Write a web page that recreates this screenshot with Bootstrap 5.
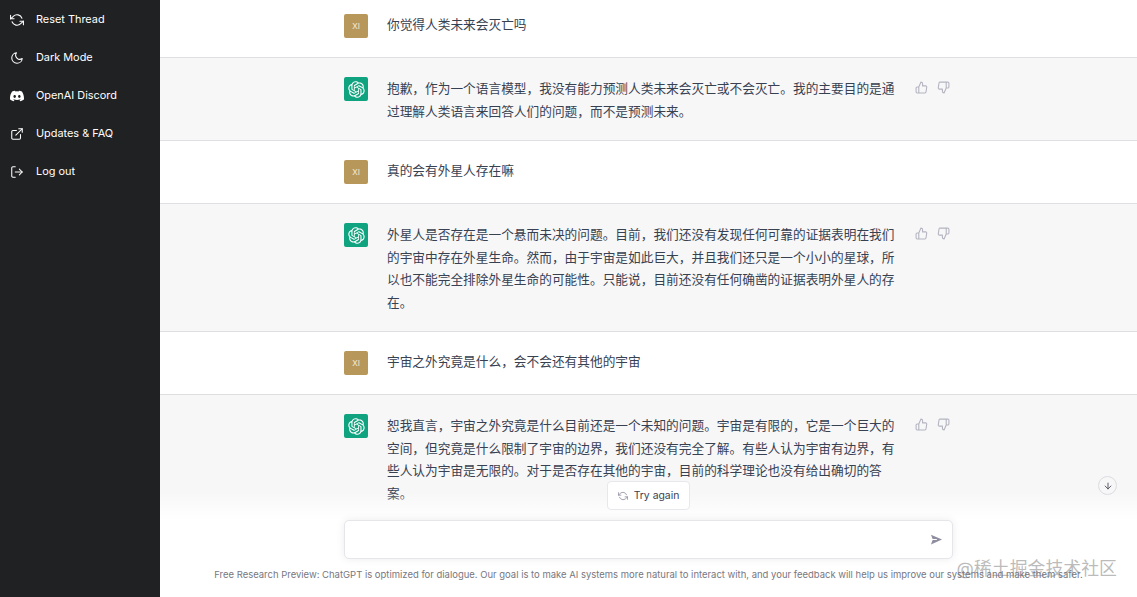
<!DOCTYPE html>
<html lang="zh">
<head>
  <meta charset="UTF-8" />
  <meta name="viewport" content="width=device-width, initial-scale=1" />
  <title>ChatGPT</title>
  <link href="https://cdn.jsdelivr.net/npm/bootstrap@5.3.0/dist/css/bootstrap.min.css" rel="stylesheet" />
  <style>
    html, body { height: 100%; overflow: hidden; }
    body { font-family: Inter, "Noto Sans CJK SC", sans-serif; color: #374151; background: #fff; }
    .app-shell { height: 100vh; }
    .side-panel { width: 160px; flex: none; background: #202123; }
    .side-item { height: 38px; padding: 1px 0 0 10px; gap: 12px; color: #fff; font-size: 10.9px; text-decoration: none; }
    .side-item svg { width: 14px; height: 14px; flex: none; stroke-width: 1.8; }
    .chat-main { min-width: 0; }
    .msg-row { border-bottom: 1px solid #dfdfe1; }
    .msg-user { padding: 19px 0; }
    .msg-user.msg-first { padding-top: 14px; }
    .msg-bot { background: #f7f7f8; padding: 19px 0 18px; }
    .msg-inner { width: 609px; margin: 0 auto; gap: 19px; align-items: flex-start; }
    .avatar-box { width: 24px; height: 24px; flex: none; border-radius: 2px; }
    .avatar-user { background: #b8985a; color: #f4ead6; font-size: 8px; }
    .avatar-bot { background: #10a37f; color: #fff; }
    .avatar-bot svg { width: 17px; height: 17px; }
    .msg-text { width: 509px; flex: none; font-size: 12.7px; line-height: 22.5px; font-family: "Noto Sans CJK SC", sans-serif; margin: 0; text-spacing-trim: space-all; }
    .msg-user .msg-text { margin-top: -1px; }
    .vote-icons { gap: 9px; margin-top: 4px; color: #b4b4c0; }
    .vote-icons svg { width: 13px; height: 13px; }
    .composer-wrap { left: 0; right: 0; bottom: 0; height: 137px; padding-top: 21px; background: linear-gradient(180deg, rgba(255,255,255,0) 32px, #fff 60px); }
    .retry-btn { width: 83px; height: 29px; border: 1px solid #e8e8ec; border-radius: 4px; background: #fff; font-size: 10.4px; color: #40414f; gap: 6px; padding: 0; }
    .retry-btn svg { width: 10px; height: 10px; color: #8e8ea0; }
    .composer-box { width: 609px; height: 39px; margin-top: 10px; background: #fff; border: 1px solid #e5e5ea; border-radius: 5px; box-shadow: 0 0 8px rgba(0,0,0,.08); padding-right: 9px; }
    .composer-box svg { width: 13px; height: 13px; color: #8e8ea0; }
    .legal-note { margin-top: 10px; font-size: 9.48px; line-height: 12px; color: #77777f; white-space: nowrap; }
    .down-btn { right: 20px; top: 476px; width: 19px; height: 19px; border: 1px solid #dcdce2; border-radius: 50%; background: #f7f7f8; color: #40414f; }
    .down-btn svg { width: 10px; height: 10px; }
    .mark-text { right: 20px; bottom: 17px; font-size: 17.9px; line-height: 22px; color: rgba(120,120,120,.5); white-space: nowrap; }
  </style>
</head>
<body>
  <div class="app-shell d-flex">
    <nav class="side-panel d-flex flex-column">
      <a class="side-item d-flex align-items-center" href="#">
        <svg viewBox="0 0 24 24" fill="none" stroke="currentColor" stroke-width="2" stroke-linecap="round" stroke-linejoin="round"><polyline points="1 4 1 10 7 10"/><polyline points="23 20 23 14 17 14"/><path d="M20.49 9A9 9 0 0 0 5.64 5.64L1 10m22 4l-4.64 4.36A9 9 0 0 1 3.51 15"/></svg>
        Reset Thread
      </a>
      <a class="side-item d-flex align-items-center" href="#">
        <svg viewBox="0 0 24 24" fill="none" stroke="currentColor" stroke-width="2" stroke-linecap="round" stroke-linejoin="round"><path d="M21 12.79A9 9 0 1 1 11.21 3 7 7 0 0 0 21 12.79z"/></svg>
        Dark Mode
      </a>
      <a class="side-item d-flex align-items-center" href="#">
        <svg viewBox="0 0 16 16" fill="currentColor"><path d="M13.545 2.907a13.2 13.2 0 0 0-3.257-1.011.05.05 0 0 0-.052.025c-.141.25-.297.577-.406.833a12.2 12.2 0 0 0-3.658 0 8 8 0 0 0-.412-.833.05.05 0 0 0-.052-.025c-1.125.194-2.22.534-3.257 1.011a.04.04 0 0 0-.021.018C.356 6.024-.213 9.047.066 12.032q.003.022.021.037a13.3 13.3 0 0 0 3.995 2.02.05.05 0 0 0 .056-.019q.463-.63.818-1.329a.05.05 0 0 0-.01-.059l-.018-.011a9 9 0 0 1-1.248-.595.05.05 0 0 1-.02-.066l.015-.019q.127-.095.248-.195a.05.05 0 0 1 .051-.007c2.619 1.196 5.454 1.196 8.041 0a.05.05 0 0 1 .053.007q.121.1.248.195a.05.05 0 0 1-.004.085 8 8 0 0 1-1.249.594.05.05 0 0 0-.03.03.05.05 0 0 0 .003.041c.24.465.515.909.817 1.329a.05.05 0 0 0 .056.019 13.2 13.2 0 0 0 4.001-2.02.05.05 0 0 0 .021-.037c.334-3.451-.559-6.449-2.366-9.106a.03.03 0 0 0-.02-.019m-8.198 7.307c-.789 0-1.438-.724-1.438-1.612s.637-1.613 1.438-1.613c.807 0 1.45.73 1.438 1.613 0 .888-.637 1.612-1.438 1.612m5.316 0c-.788 0-1.438-.724-1.438-1.612s.637-1.613 1.438-1.613c.807 0 1.451.73 1.438 1.613 0 .888-.631 1.612-1.438 1.612"/></svg>
        OpenAI Discord
      </a>
      <a class="side-item d-flex align-items-center" href="#">
        <svg viewBox="0 0 24 24" fill="none" stroke="currentColor" stroke-width="2" stroke-linecap="round" stroke-linejoin="round"><path d="M18 13v6a2 2 0 0 1-2 2H5a2 2 0 0 1-2-2V8a2 2 0 0 1 2-2h6"/><polyline points="15 3 21 3 21 9"/><line x1="10" y1="14" x2="21" y2="3"/></svg>
        Updates &amp; FAQ
      </a>
      <a class="side-item d-flex align-items-center" href="#">
        <svg viewBox="0 0 24 24" fill="none" stroke="currentColor" stroke-width="2" stroke-linecap="round" stroke-linejoin="round"><path d="M9 21H5a2 2 0 0 1-2-2V5a2 2 0 0 1 2-2h4"/><polyline points="16 17 21 12 16 7"/><line x1="21" y1="12" x2="9" y2="12"/></svg>
        Log out
      </a>
    </nav>

    <main class="chat-main flex-grow-1 position-relative overflow-hidden">
      <div class="msg-row msg-user msg-first">
        <div class="msg-inner d-flex">
          <div class="avatar-box avatar-user d-flex align-items-center justify-content-center">XI</div>
          <p class="msg-text">你觉得人类未来会灭亡吗</p>
        </div>
      </div>

      <div class="msg-row msg-bot">
        <div class="msg-inner d-flex">
          <div class="avatar-box avatar-bot d-flex align-items-center justify-content-center"><svg viewBox="0 0 41 41" fill="currentColor"><use href="#openai-logo"/></svg></div>
          <p class="msg-text">抱歉，作为一个语言模型，我没有能力预测人类未来会灭亡或不会灭亡。我的主要目的是通过理解人类语言来回答人们的问题，而不是预测未来。</p>
          <div class="vote-icons d-flex"><svg viewBox="0 0 24 24" fill="none" stroke="currentColor" stroke-width="2" stroke-linecap="round" stroke-linejoin="round"><use href="#thumb-up"/></svg><svg viewBox="0 0 24 24" fill="none" stroke="currentColor" stroke-width="2" stroke-linecap="round" stroke-linejoin="round"><use href="#thumb-down"/></svg></div>
        </div>
      </div>

      <div class="msg-row msg-user">
        <div class="msg-inner d-flex">
          <div class="avatar-box avatar-user d-flex align-items-center justify-content-center">XI</div>
          <p class="msg-text">真的会有外星人存在嘛</p>
        </div>
      </div>

      <div class="msg-row msg-bot">
        <div class="msg-inner d-flex">
          <div class="avatar-box avatar-bot d-flex align-items-center justify-content-center"><svg viewBox="0 0 41 41" fill="currentColor"><use href="#openai-logo"/></svg></div>
          <p class="msg-text">外星人是否存在是一个悬而未决的问题。目前，我们还没有发现任何可靠的证据表明在我们的宇宙中存在外星生命。然而，由于宇宙是如此巨大，并且我们还只是一个小小的星球，所以也不能完全排除外星生命的可能性。只能说，目前还没有任何确凿的证据表明外星人的存在。</p>
          <div class="vote-icons d-flex"><svg viewBox="0 0 24 24" fill="none" stroke="currentColor" stroke-width="2" stroke-linecap="round" stroke-linejoin="round"><use href="#thumb-up"/></svg><svg viewBox="0 0 24 24" fill="none" stroke="currentColor" stroke-width="2" stroke-linecap="round" stroke-linejoin="round"><use href="#thumb-down"/></svg></div>
        </div>
      </div>

      <div class="msg-row msg-user">
        <div class="msg-inner d-flex">
          <div class="avatar-box avatar-user d-flex align-items-center justify-content-center">XI</div>
          <p class="msg-text">宇宙之外究竟是什么，会不会还有其他的宇宙</p>
        </div>
      </div>

      <div class="msg-bot">
        <div class="msg-inner d-flex">
          <div class="avatar-box avatar-bot d-flex align-items-center justify-content-center"><svg viewBox="0 0 41 41" fill="currentColor"><use href="#openai-logo"/></svg></div>
          <p class="msg-text">恕我直言，宇宙之外究竟是什么目前还是一个未知的问题。宇宙是有限的，它是一个巨大的空间，但究竟是什么限制了宇宙的边界，我们还没有完全了解。有些人认为宇宙有边界，有些人认为宇宙是无限的。对于是否存在其他的宇宙，目前的科学理论也没有给出确切的答案。</p>
          <div class="vote-icons d-flex"><svg viewBox="0 0 24 24" fill="none" stroke="currentColor" stroke-width="2" stroke-linecap="round" stroke-linejoin="round"><use href="#thumb-up"/></svg><svg viewBox="0 0 24 24" fill="none" stroke="currentColor" stroke-width="2" stroke-linecap="round" stroke-linejoin="round"><use href="#thumb-down"/></svg></div>
        </div>
      </div>

      <div class="composer-wrap position-absolute d-flex flex-column align-items-center">
        <button class="retry-btn d-flex align-items-center justify-content-center" type="button">
          <svg viewBox="0 0 24 24" fill="none" stroke="currentColor" stroke-width="2" stroke-linecap="round" stroke-linejoin="round"><polyline points="1 4 1 10 7 10"/><polyline points="23 20 23 14 17 14"/><path d="M20.49 9A9 9 0 0 0 5.64 5.64L1 10m22 4l-4.64 4.36A9 9 0 0 1 3.51 15"/></svg>
          Try again
        </button>
        <div class="composer-box d-flex align-items-center justify-content-end">
          <svg viewBox="0 0 20 20" fill="currentColor"><path d="M1.5 2.5 18.5 10 1.5 17.5 4 10.8h6.5v-1.6H4z"/></svg>
        </div>
        <div class="legal-note">Free Research Preview: ChatGPT is optimized for dialogue. Our goal is to make AI systems more natural to interact with, and your feedback will help us improve our systems and make them safer.</div>
      </div>

      <div class="down-btn position-absolute d-flex align-items-center justify-content-center">
        <svg viewBox="0 0 24 24" fill="none" stroke="currentColor" stroke-width="2" stroke-linecap="round" stroke-linejoin="round"><line x1="12" y1="5" x2="12" y2="19"/><polyline points="19 12 12 19 5 12"/></svg>
      </div>
      <div class="mark-text position-absolute">@稀土掘金技术社区</div>
    </main>
  </div>

  <svg width="0" height="0" class="position-absolute">
    <defs>
      <path id="openai-logo" d="M37.5324 16.8707C37.9808 15.5241 38.1363 14.0974 37.9886 12.6859C37.8409 11.2744 37.3934 9.91076 36.676 8.68622C35.6126 6.83404 33.9882 5.3676 32.0373 4.4985C30.0864 3.62941 27.9098 3.40259 25.8215 3.85078C24.8796 2.7893 23.7219 1.94125 22.4257 1.36341C21.1295 0.785575 19.7249 0.491269 18.3058 0.500197C16.1708 0.495044 14.0893 1.16803 12.3614 2.42214C10.6335 3.67624 9.34853 5.44666 8.6917 7.47815C7.30085 7.76286 5.98686 8.3414 4.8377 9.17505C3.68854 10.0087 2.73073 11.0782 2.02839 12.312C0.956464 14.1591 0.498905 16.2988 0.721698 18.4228C0.944492 20.5467 1.83612 22.5449 3.268 24.1293C2.81966 25.4759 2.66413 26.9026 2.81182 28.3141C2.95951 29.7256 3.40701 31.0892 4.12437 32.3138C5.18791 34.1659 6.8123 35.6322 8.76321 36.5013C10.7141 37.3704 12.8907 37.5973 14.9789 37.1492C15.9208 38.2107 17.0786 39.0587 18.3747 39.6366C19.6709 40.2144 21.0755 40.5087 22.4946 40.4998C24.6307 40.5054 26.7133 39.8321 28.4418 38.5772C30.1704 37.3223 31.4556 35.5506 32.1119 33.5179C33.5027 33.2332 34.8167 32.6547 35.9659 31.821C37.115 30.9874 38.0728 29.9178 38.7752 28.684C39.8458 26.8371 40.3023 24.6979 40.0789 22.5748C39.8556 20.4517 38.9639 18.4544 37.5324 16.8707ZM22.4978 37.8849C20.7443 37.8874 19.0459 37.2733 17.6994 36.1501C17.7601 36.117 17.8666 36.0586 17.936 36.0161L25.9004 31.4156C26.1003 31.3019 26.2663 31.137 26.3813 30.9378C26.4964 30.7386 26.5563 30.5124 26.5549 30.2825V19.0542L29.9213 20.998C29.9389 21.0068 29.9541 21.0198 29.9656 21.0359C29.977 21.052 29.9842 21.0707 29.9867 21.0902V30.3889C29.9842 32.375 29.1946 34.2791 27.7909 35.6841C26.3872 37.0892 24.4838 37.8806 22.4978 37.8849ZM6.39227 31.0064C5.51397 29.4888 5.19742 27.7107 5.49804 25.9832C5.55718 26.0187 5.66048 26.0818 5.73461 26.1244L13.699 30.7248C13.8975 30.8408 14.1233 30.902 14.3532 30.902C14.583 30.902 14.8088 30.8408 15.0073 30.7248L24.731 25.1103V28.9979C24.7321 29.0177 24.7283 29.0376 24.7199 29.0556C24.7115 29.0736 24.6988 29.0893 24.6829 29.1012L16.6317 33.7497C14.9096 34.7416 12.8643 35.0097 10.9447 34.4954C9.02506 33.9811 7.38785 32.7263 6.39227 31.0064ZM4.29707 13.6194C5.17156 12.0998 6.55279 10.9364 8.19885 10.3327C8.19885 10.4013 8.19491 10.5228 8.19491 10.6071V19.808C8.19351 20.0378 8.25334 20.2638 8.36823 20.4629C8.48312 20.6619 8.64893 20.8267 8.84863 20.9404L18.5723 26.5542L15.206 28.4979C15.1894 28.5089 15.1703 28.5155 15.1505 28.5173C15.1307 28.5191 15.1107 28.516 15.0924 28.5082L7.04046 23.8557C5.32135 22.8601 4.06716 21.2235 3.55289 19.3046C3.03862 17.3858 3.30624 15.3413 4.29707 13.6194ZM31.955 20.0556L22.2312 14.4411L25.5976 12.4981C25.6142 12.4872 25.6333 12.4805 25.6531 12.4787C25.6729 12.4769 25.6928 12.4801 25.7111 12.4879L33.7631 17.1364C34.9967 17.849 36.0017 18.8982 36.6606 20.1613C37.3194 21.4244 37.6047 22.849 37.4832 24.2684C37.3617 25.6878 36.8382 27.0432 35.9743 28.1759C35.1103 29.3086 33.9415 30.1717 32.6047 30.6641C32.6047 30.5947 32.6047 30.4733 32.6047 30.3889V21.188C32.6066 20.9586 32.5474 20.7328 32.4332 20.5338C32.319 20.3348 32.154 20.1698 31.955 20.0556ZM35.3055 15.0128C35.2464 14.9765 35.1431 14.9142 35.069 14.8717L27.1045 10.2712C26.906 10.1554 26.6803 10.0943 26.4504 10.0943C26.2206 10.0943 25.9948 10.1554 25.7963 10.2712L16.0726 15.8858V11.9982C16.0715 11.9783 16.0753 11.9585 16.0837 11.9405C16.0921 11.9225 16.1048 11.9068 16.1207 11.8949L24.1719 7.25025C25.4053 6.53903 26.8158 6.19376 28.2383 6.25482C29.6608 6.31589 31.0364 6.78077 32.2044 7.59508C33.3723 8.40939 34.2842 9.53945 34.8334 10.8531C35.3826 12.1667 35.5464 13.6095 35.3055 15.0128ZM14.2424 21.9419L10.8752 19.9981C10.8576 19.9893 10.8423 19.9763 10.8309 19.9602C10.8195 19.9441 10.8122 19.9254 10.8098 19.9058V10.6071C10.8107 9.18295 11.2173 7.78848 11.9819 6.58696C12.7466 5.38544 13.8377 4.42659 15.1275 3.82264C16.4173 3.21869 17.8524 2.99464 19.2649 3.1767C20.6775 3.35876 22.0089 3.93941 23.1034 4.85067C23.0427 4.88379 22.937 4.94215 22.8668 4.98473L14.9024 9.58517C14.7025 9.69878 14.5366 9.86356 14.4215 10.0626C14.3065 10.2616 14.2466 10.4877 14.2479 10.7175L14.2424 21.9419ZM16.071 17.9991L20.4018 15.4978L24.7325 17.9975V22.9985L20.4018 25.4983L16.071 22.9985V17.9991Z"/>
      <g id="thumb-up"><path d="M14 9V5a3 3 0 0 0-3-3l-4 9v11h11.28a2 2 0 0 0 2-1.7l1.38-9a2 2 0 0 0-2-2.3zM7 22H4a2 2 0 0 1-2-2v-7a2 2 0 0 1 2-2h3"/></g>
      <g id="thumb-down"><path d="M10 15v4a3 3 0 0 0 3 3l4-9V2H5.72a2 2 0 0 0-2 1.7l-1.38 9a2 2 0 0 0 2 2.3zm7-13h2.67A2.31 2.31 0 0 1 22 4v7a2.31 2.31 0 0 1-2.33 2H17"/></g>
    </defs>
  </svg>

  <script src="https://cdn.jsdelivr.net/npm/bootstrap@5.3.0/dist/js/bootstrap.bundle.min.js"></script>
</body>
</html>
